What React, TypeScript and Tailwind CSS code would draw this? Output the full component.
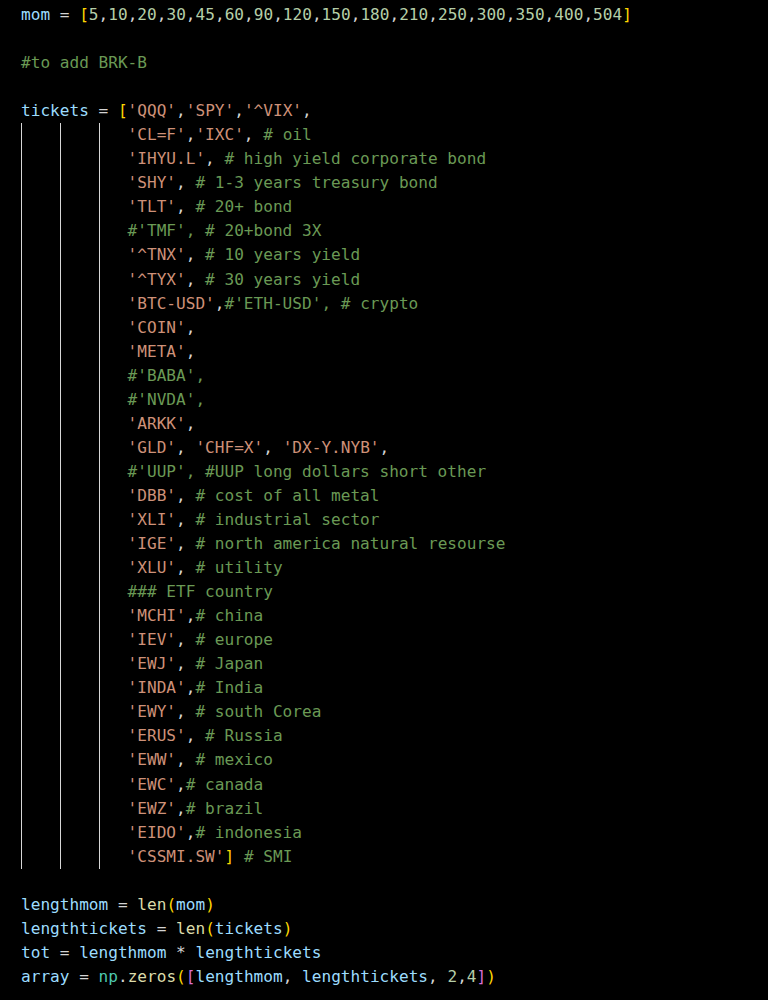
import React from 'react';

type Tok = { text: string; cls: string };

const PLAIN = 'text-[#d4d4d4]';
const VAR = 'text-[#9cdcfe]';
const STR = 'text-[#ce9178]';
const NUM = 'text-[#b5cea8]';
const COMMENT = 'text-[#6a9955]';
const FUNC = 'text-[#dcdcaa]';
const MODULE = 'text-[#4ec9b0]';
const BRACKETS = ['text-[#ffd700]', 'text-[#da70d6]', 'text-[#179fff]'];

const INDENT = '           ';

const SOURCE: string[] = [
  'mom = [5,10,20,30,45,60,90,120,150,180,210,250,300,350,400,504]',
  '',
  '#to add BRK-B',
  '',
  "tickets = ['QQQ','SPY','^VIX',",
  INDENT + "'CL=F','IXC', # oil",
  INDENT + "'IHYU.L', # high yield corporate bond",
  INDENT + "'SHY', # 1-3 years treasury bond",
  INDENT + "'TLT', # 20+ bond",
  INDENT + "#'TMF', # 20+bond 3X",
  INDENT + "'^TNX', # 10 years yield",
  INDENT + "'^TYX', # 30 years yield",
  INDENT + "'BTC-USD',#'ETH-USD', # crypto",
  INDENT + "'COIN',",
  INDENT + "'META',",
  INDENT + "#'BABA',",
  INDENT + "#'NVDA',",
  INDENT + "'ARKK',",
  INDENT + "'GLD', 'CHF=X', 'DX-Y.NYB',",
  INDENT + "#'UUP', #UUP long dollars short other",
  INDENT + "'DBB', # cost of all metal",
  INDENT + "'XLI', # industrial sector",
  INDENT + "'IGE', # north america natural resourse",
  INDENT + "'XLU', # utility",
  INDENT + '### ETF country',
  INDENT + "'MCHI',# china",
  INDENT + "'IEV', # europe",
  INDENT + "'EWJ', # Japan",
  INDENT + "'INDA',# India",
  INDENT + "'EWY', # south Corea",
  INDENT + "'ERUS', # Russia",
  INDENT + "'EWW', # mexico",
  INDENT + "'EWC',# canada",
  INDENT + "'EWZ',# brazil",
  INDENT + "'EIDO',# indonesia",
  INDENT + "'CSSMI.SW'] # SMI",
  '',
  'lengthmom = len(mom)',
  'lengthtickets = len(tickets)',
  'tot = lengthmom * lengthtickets',
  'array = np.zeros([lengthmom, lengthtickets, 2,4])',
];

// tiny python-ish highlighter, bracket depth carries across lines
function tokenize(lines: string[]): Tok[][] {
  let depth = 0;
  return lines.map((line) => {
    const out: Tok[] = [];
    const push = (text: string, cls: string) => {
      const last = out[out.length - 1];
      if (last && last.cls === cls && cls === PLAIN) last.text += text;
      else out.push({ text, cls });
    };
    let i = 0;
    while (i < line.length) {
      const c = line[i];
      if (c === '#') {
        push(line.slice(i), COMMENT);
        break;
      }
      if (c === "'") {
        const j = line.indexOf("'", i + 1);
        const end = j === -1 ? line.length : j + 1;
        push(line.slice(i, end), STR);
        i = end;
        continue;
      }
      if ('([{'.includes(c)) {
        push(c, BRACKETS[depth % 3]);
        depth++;
        i++;
        continue;
      }
      if (')]}'.includes(c)) {
        depth--;
        push(c, BRACKETS[depth % 3]);
        i++;
        continue;
      }
      if (/[0-9]/.test(c)) {
        let j = i;
        while (j < line.length && /[0-9.]/.test(line[j])) j++;
        push(line.slice(i, j), NUM);
        i = j;
        continue;
      }
      if (/[A-Za-z_]/.test(c)) {
        let j = i;
        while (j < line.length && /\w/.test(line[j])) j++;
        const word = line.slice(i, j);
        const cls = line[j] === '(' ? FUNC : word === 'np' ? MODULE : VAR;
        push(word, cls);
        i = j;
        continue;
      }
      push(c, PLAIN);
      i++;
    }
    return out;
  });
}

function CodeLine({ toks, guides }: { toks: Tok[]; guides: boolean }) {
  let shown = toks;
  if (guides && toks.length && toks[0].cls === PLAIN) {
    shown = [{ ...toks[0], text: toks[0].text.slice(INDENT.length) }, ...toks.slice(1)];
  }
  return (
    <div className="flex h-[24.05px] leading-[24.05px] whitespace-pre">
      {guides && (
        <div className="flex shrink-0">
          <span className="w-[4ch] border-l border-[#d6d6d6]" />
          <span className="w-[4ch] border-l border-[#d6d6d6]" />
          <span className="w-[3ch] border-l border-[#d6d6d6]" />
        </div>
      )}
      {shown.map((t, k) => (
        <span key={k} className={t.cls}>
          {t.text}
        </span>
      ))}
    </div>
  );
}

export default function App() {
  const lines = tokenize(SOURCE);
  return (
    <div className="w-[768px] h-[1000px] bg-black overflow-hidden pl-[21px] pt-[3px] font-['DejaVu_Sans_Mono',monospace] text-[16.1px]">
      {lines.map((toks, idx) => (
        <CodeLine key={idx} toks={toks} guides={SOURCE[idx].startsWith(INDENT)} />
      ))}
    </div>
  );
}
